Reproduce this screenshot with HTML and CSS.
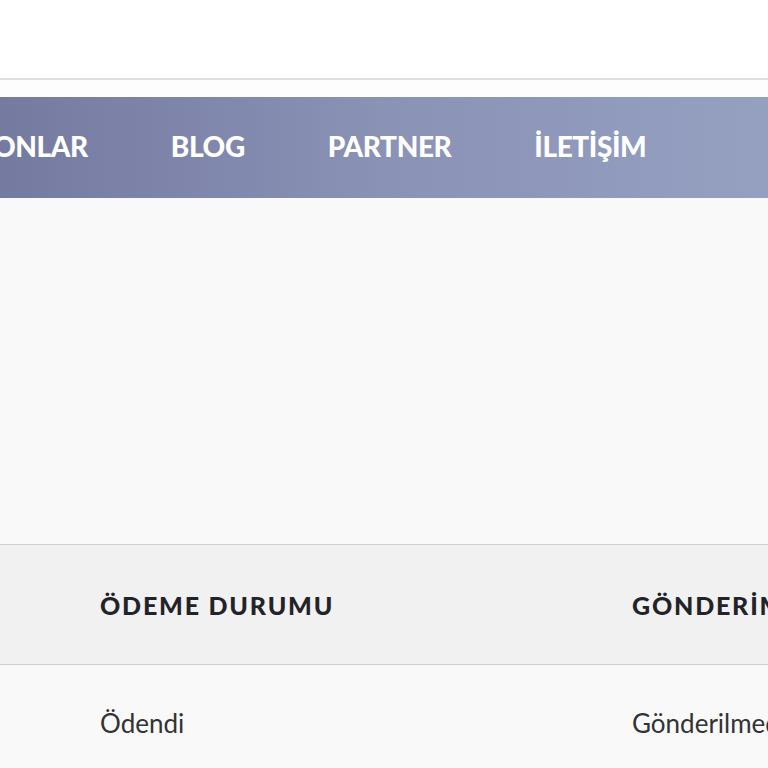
FILE: index.html
```html
<!DOCTYPE html>
<html lang="tr">
<head>
<meta charset="utf-8">
<link rel="stylesheet" href="styles.css">
</head>
<body>
<header class="topbar"></header>
<div class="nav-wrap">
  <nav class="nav">
    <a class="nav-item first">ONLAR</a>
    <a class="nav-item">BLOG</a>
    <a class="nav-item">PARTNER</a>
    <a class="nav-item">İLETİŞİM</a>
  </nav>
</div>
<main class="content"></main>
<section class="orders">
  <div class="row head">
    <div class="cell c1">ÖDEME DURUMU</div>
    <div class="cell c2">GÖNDERİM DURUMU</div>
  </div>
  <div class="row body">
    <div class="cell c1">Ödendi</div>
    <div class="cell c2">Gönderilmedi</div>
  </div>
</section>
</body>
</html>
```
FILE: styles.css
```css
html, body {
  margin: 0;
  padding: 0;
  background: #f9f9f9;
  font-family: Lato, "Open Sans", sans-serif;
  overflow: hidden;
}
.topbar {
  height: 78px;
  background: #fff;
  border-bottom: 2px solid #dedede;
}
.nav-wrap {
  background: #fdfdfd;
  padding-top: 17px;
}
.nav {
  height: 101px;
  display: flex;
  align-items: center;
  gap: 83px;
  background: linear-gradient(90deg, #757aa0 0%, #8a92b6 50%, #95a0c1 100%);
  white-space: nowrap;
}
.nav-item {
  color: #fff;
  font-weight: 900;
  font-size: 28px;
  letter-spacing: -0.4px;
  padding-bottom: 4px;
}
.nav-item.first {
  margin-left: -7px;
}
.content {
  height: 346px;
  background: #f9f9f9;
}
.orders {
  white-space: nowrap;
}
.row {
  display: grid;
  grid-template-columns: 532px 1fr;
  padding-left: 100px;
  align-items: center;
}
.row.head {
  height: 119px;
  background: #f1f1f1;
  border-top: 1px solid #cfcfcf;
  border-bottom: 1px solid #cfcfcf;
}
.row.head .cell {
  font-weight: 900;
  font-size: 25px;
  letter-spacing: 1.8px;
  color: #222328;
  padding-top: 1px;
}
.row.body {
  height: 118px;
  background: #f9f9f9;
}
.row.body .cell {
  font-size: 26px;
  color: #333;
  padding-bottom: 2px;
}
```
